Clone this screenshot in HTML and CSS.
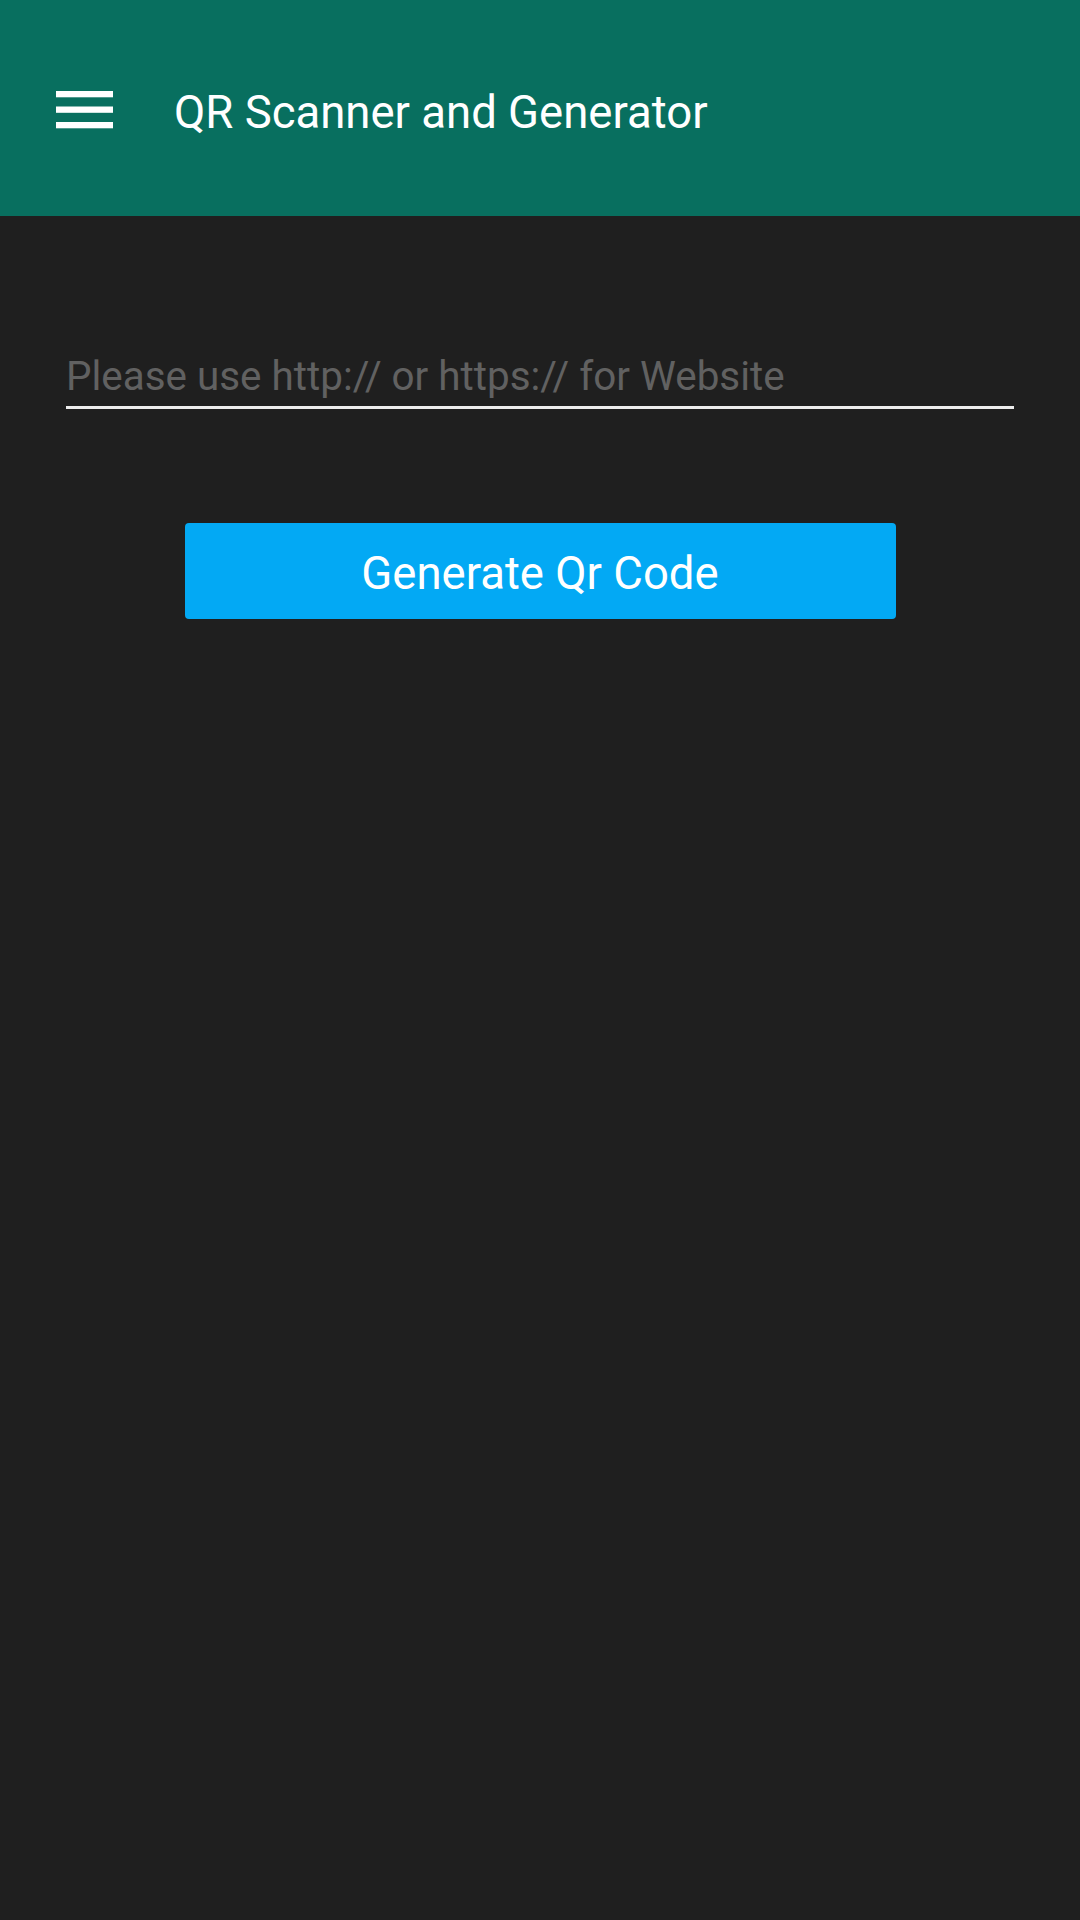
FILE: index.html
```html
<!DOCTYPE html>
<html lang="en">
<head>
<meta charset="utf-8">
<title>QR Scanner and Generator</title>
<link rel="stylesheet" href="styles.css">
</head>
<body>
<header class="toolbar">
  <svg class="menu" width="57" height="38" viewBox="0 0 57 38" aria-hidden="true">
    <rect x="0" y="0" width="57" height="6.3" fill="#ffffff"/>
    <rect x="0" y="15.5" width="57" height="6.3" fill="#ffffff"/>
    <rect x="0" y="31" width="57" height="6.3" fill="#ffffff"/>
  </svg>
  <h1 class="title">QR Scanner and Generator</h1>
</header>
<main class="content">
  <div class="field">Please use http:// or https:// for Website</div>
  <button class="btn">Generate Qr Code</button>
</main>
</body>
</html>
```

FILE: styles.css
```css
html, body {
  margin: 0;
  padding: 0;
}
body {
  width: 1080px;
  height: 1920px;
  background: #1f1f1f;
  font-family: Roboto, "Noto Sans", sans-serif;
  overflow: hidden;
}
.toolbar {
  height: 216px;
  box-sizing: border-box;
  background: #086f5f;
  display: flex;
  align-items: flex-start;
  padding: 91px 0 0 56px;
}
.menu {
  display: block;
  flex: none;
}
.title {
  margin: -1px 0 0 61px;
  font-weight: 400;
  font-size: 45.5px;
  line-height: 46px;
  color: #ffffff;
}
.content {
  padding: 140px 66px 0;
}
.field {
  font-size: 40.4px;
  line-height: 41px;
  color: #616161;
  padding: 0 0 9px 0;
  border-bottom: 3px solid #ececec;
  white-space: nowrap;
}
.btn {
  display: block;
  width: 711px;
  height: 96px;
  margin: 114px auto 0;
  padding: 5px 0 0;
  box-sizing: border-box;
  border: none;
  border-radius: 4px;
  background: #03a9f4;
  color: #ffffff;
  font-family: Roboto, "Noto Sans", sans-serif;
  font-size: 45.5px;
  line-height: 90px;
  text-align: center;
}
```
